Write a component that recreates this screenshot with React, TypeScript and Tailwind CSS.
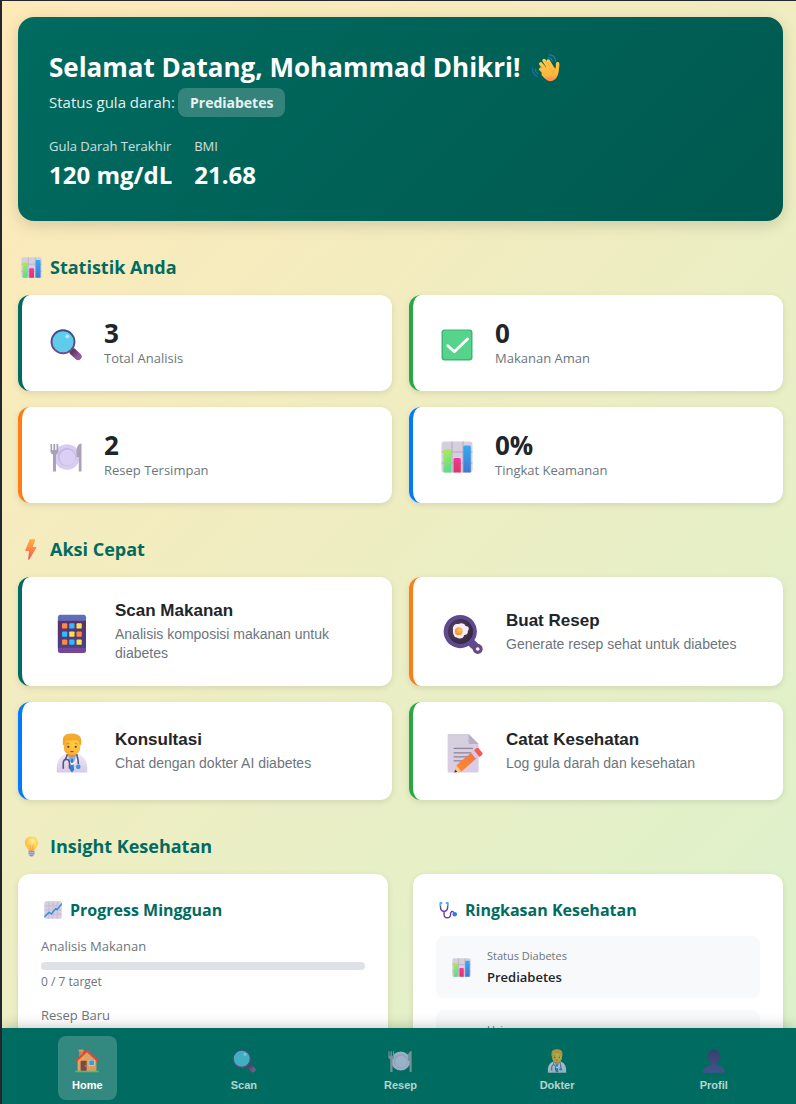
import type { ReactNode } from "react";

type IconProps = { className?: string };

/* Gradients shared by all the pictograms. */
function Gradients() {
  return (
    <svg className="absolute h-0 w-0" aria-hidden="true">
      <defs>
        <linearGradient id="g-green" x1="0" y1="0" x2="0.2" y2="1">
          <stop offset="0" stopColor="#b4ec51" />
          <stop offset="1" stopColor="#5fdc8c" />
        </linearGradient>
        <linearGradient id="g-pink" x1="0" y1="0" x2="0" y2="1">
          <stop offset="0" stopColor="#f5379a" />
          <stop offset="1" stopColor="#dc3560" />
        </linearGradient>
        <linearGradient id="g-blue" x1="0" y1="0" x2="0" y2="1">
          <stop offset="0" stopColor="#35aaf6" />
          <stop offset="1" stopColor="#4279d0" />
        </linearGradient>
        <linearGradient id="g-paper" x1="0" y1="0" x2="0" y2="1">
          <stop offset="0" stopColor="#d5cfdd" />
          <stop offset="1" stopColor="#d9cde6" />
        </linearGradient>
        <linearGradient id="g-rim" x1="0" y1="0" x2="0" y2="1">
          <stop offset="0" stopColor="#3c4a8c" />
          <stop offset="1" stopColor="#7a4a8c" />
        </linearGradient>
        <linearGradient id="g-handle" x1="0" y1="0" x2="1" y2="1">
          <stop offset="0" stopColor="#5f3a68" />
          <stop offset="1" stopColor="#95569c" />
        </linearGradient>
        <linearGradient id="g-bolt" x1="0" y1="0" x2="0" y2="1">
          <stop offset="0" stopColor="#ffb13c" />
          <stop offset="0.6" stopColor="#fa7d4c" />
          <stop offset="1" stopColor="#f5445f" />
        </linearGradient>
        <linearGradient id="g-phone" x1="0" y1="0" x2="0" y2="1">
          <stop offset="0" stopColor="#6070bb" />
          <stop offset="1" stopColor="#754494" />
        </linearGradient>
        <linearGradient id="g-screen" x1="0" y1="0" x2="0" y2="1">
          <stop offset="0" stopColor="#5c3166" />
          <stop offset="1" stopColor="#46418c" />
        </linearGradient>
        <radialGradient id="g-pan" cx="0.4" cy="0.4" r="0.7">
          <stop offset="0" stopColor="#5c4270" />
          <stop offset="1" stopColor="#2f2638" />
        </radialGradient>
        <radialGradient id="g-yolk" cx="0.65" cy="0.35" r="0.8">
          <stop offset="0" stopColor="#ffc94a" />
          <stop offset="1" stopColor="#ee8a2e" />
        </radialGradient>
        <radialGradient id="g-skin" cx="0.65" cy="0.4" r="0.8">
          <stop offset="0" stopColor="#ffd33b" />
          <stop offset="1" stopColor="#f9a435" />
        </radialGradient>
        <linearGradient id="g-hair" x1="0" y1="0" x2="0" y2="1">
          <stop offset="0" stopColor="#f2b034" />
          <stop offset="1" stopColor="#f79b28" />
        </linearGradient>
        <linearGradient id="g-coat" x1="0" y1="0" x2="0" y2="1">
          <stop offset="0" stopColor="#efeafa" />
          <stop offset="1" stopColor="#d5cae6" />
        </linearGradient>
        <linearGradient id="g-pencil" x1="0" y1="1" x2="1" y2="0">
          <stop offset="0" stopColor="#ff8a2e" />
          <stop offset="1" stopColor="#f5743f" />
        </linearGradient>
        <linearGradient id="g-hand" gradientUnits="userSpaceOnUse" x1="16" y1="4" x2="19" y2="31">
          <stop offset="0" stopColor="#ffcb4c" />
          <stop offset="0.75" stopColor="#ffb63c" />
          <stop offset="1" stopColor="#f58a55" />
        </linearGradient>
        <radialGradient id="g-bulb" cx="0.6" cy="0.35" r="0.7">
          <stop offset="0" stopColor="#fff0a0" />
          <stop offset="0.5" stopColor="#ffd250" />
          <stop offset="1" stopColor="#f5b54a" />
        </radialGradient>
        <linearGradient id="g-wall" x1="0" y1="0" x2="1" y2="1">
          <stop offset="0" stopColor="#e8a868" />
          <stop offset="1" stopColor="#d69a58" />
        </linearGradient>
        <linearGradient id="g-bust" x1="0" y1="0" x2="0" y2="1">
          <stop offset="0" stopColor="#4b2f70" />
          <stop offset="1" stopColor="#5c4aa0" />
        </linearGradient>
        <linearGradient id="g-tube" x1="0" y1="0" x2="0" y2="1">
          <stop offset="0" stopColor="#3f7fd8" />
          <stop offset="0.4" stopColor="#5c3aa0" />
          <stop offset="1" stopColor="#7442a0" />
        </linearGradient>
      </defs>
    </svg>
  );
}

function Svg({ className, children }: IconProps & { children: ReactNode }) {
  return (
    <svg viewBox="0 0 32 32" className={className} aria-hidden="true">
      {children}
    </svg>
  );
}

function BarChart({ className }: IconProps) {
  return (
    <Svg className={className}>
      <rect x="0.5" y="0.5" width="31" height="31" rx="3" fill="url(#g-paper)" />
      <path d="M11 .5v31M22 .5v31M.5 11h31M.5 22h31" stroke="#b3a9c0" strokeWidth="1" />
      <path d="M2.500 31.500V9.500A1.500 1.500 0 0 1 4 8h4.500A1.500 1.500 0 0 1 10 9.500v22z" fill="url(#g-green)" />
      <path d="M12.500 31.500V18.500A1.500 1.500 0 0 1 14 17h4.300a1.500 1.500 0 0 1 1.500 1.500v13z" fill="url(#g-pink)" />
      <path d="M22.300 31.500V6a1.500 1.500 0 0 1 1.500-1.500h4.500A1.500 1.500 0 0 1 29.800 6v25.500z" fill="url(#g-blue)" />
    </Svg>
  );
}

function Magnifier({ className }: IconProps) {
  return (
    <Svg className={className}>
      <path d="m23 22.800 5 4.700" stroke="url(#g-handle)" strokeWidth="7.200" strokeLinecap="round" />
      <path d="m19.500 19.500 3 3" stroke="#5c3563" strokeWidth="3" />
      <circle cx="13" cy="12.800" r="11.500" fill="#5fcdea" stroke="url(#g-rim)" strokeWidth="1.900" />
      <circle cx="17.300" cy="7.300" r="1.900" fill="#b8ebf8" />
    </Svg>
  );
}

function CheckMark({ className }: IconProps) {
  return (
    <Svg className={className}>
      <rect x="0.500" y="0.500" width="31" height="31" rx="3" fill="#3fb578" />
      <rect x="2" y="1.500" width="28" height="28.500" rx="2.500" fill="#57d48c" />
      <path d="M6.800 16.800 13.300 22.800 26.500 10" fill="none" stroke="#fff" strokeWidth="2.900" strokeLinecap="round" strokeLinejoin="round" />
    </Svg>
  );
}

function Plate({ className }: IconProps) {
  return (
    <Svg className={className}>
      <circle cx="17" cy="16" r="12.800" fill="#d8cdf0" />
      <circle cx="17" cy="16" r="9" fill="#c3b4e2" />
      <circle cx="17.500" cy="16.600" r="8" fill="#dccff5" />
      <path d="M.5 3h1.600v6h1.300V3h1.800v6h1.300V3h1.800v7.500c0 1.700-1 2.500-2.300 3V30.500H3V13.500C1.500 13 .5 12.200.5 10.500z" fill="#aaa2b6" />
      <path d="M31.500 2.500c-2.800 0-5 3-5 8v5.500h2.300v14.500h2.700z" fill="#aba2b8" />
    </Svg>
  );
}

function Bolt({ className }: IconProps) {
  return (
    <Svg className={className}>
      <path d="M13 1.200 6.500 17c-.3.800.1 1.300.8 1.300h5L11 30.500c-.1 1.500.8 1.700 1.500.6L23.500 13.500c.5-.8.1-1.500-.8-1.500h-4.900L21.500 2c.3-.8 0-1.500-1-1.500h-6.300c-.6 0-1 .2-1.200.7z" fill="url(#g-bolt)" />
    </Svg>
  );
}

function Phone({ className }: IconProps) {
  return (
    <Svg className={className}>
      <rect x="4.700" y="0.600" width="22.500" height="30.600" rx="2" fill="url(#g-phone)" />
      <path d="M4.700 5.500h22.500v21.500H4.700z" fill="url(#g-screen)" />
      <g fill="#ff8a3d">
        <rect x="8" y="7.400" width="4.200" height="4.200" rx=".7" />
        <rect x="8" y="20.400" width="4.200" height="4.200" rx=".7" />
        <rect x="19.600" y="13.900" width="4.200" height="4.200" rx=".7" />
      </g>
      <g fill="#36b9fb">
        <rect x="13.800" y="7.400" width="4.200" height="4.200" rx=".7" />
        <rect x="8" y="13.900" width="4.200" height="4.200" rx=".7" />
        <rect x="13.800" y="20.400" width="4.200" height="4.200" rx=".7" />
      </g>
      <g fill="#ffe14f">
        <rect x="19.600" y="7.400" width="4.200" height="4.200" rx=".7" />
        <rect x="13.800" y="13.900" width="4.200" height="4.200" rx=".7" />
        <rect x="19.600" y="20.400" width="4.200" height="4.200" rx=".7" />
      </g>
    </Svg>
  );
}

function Pan({ className }: IconProps) {
  return (
    <Svg className={className}>
      <path d="m21.500 22 6 5.500" stroke="#664a8c" strokeWidth="6.500" />
      <circle cx="27.800" cy="28" r="2.700" fill="#fff" stroke="#664a82" strokeWidth="2.500" />
      <circle cx="13.800" cy="14" r="13.300" fill="#5f4a90" />
      <circle cx="14" cy="14" r="10" fill="url(#g-pan)" />
      <path d="M8 12.500c-.5-3.500 2-5 4.500-4.500 2-1.200 5-.5 5.500 1.500 2.800 0 3.300 2.500 1.800 4 .5 2-1.300 3.300-2.800 3.300-.5 3-4 3.500-6 2-2.500-.5-3.200-3.300-3-6.300z" fill="#f8ecfa" />
      <circle cx="12.600" cy="13.700" r="3.100" fill="url(#g-yolk)" />
    </Svg>
  );
}

function Doctor({ className }: IconProps) {
  return (
    <Svg className={className}>
      <path d="M3.800 31.500v-3.500c0-6.500 4-11.300 9-11.500h6.400c5 .2 9 5 9 11.500v3.500z" fill="url(#g-coat)" />
      <path d="M12.500 16.500h7l-1.500 6-2 3-2-3z" fill="#7cb4e8" />
      <path d="m15.200 20.500-.9 9 1.700 2 1.700-2-.9-9z" fill="#2f7fcf" />
      <path d="M11.500 16.500c0 4.500 1 6.500 4.500 8.500 3.500-2 4.500-4 4.500-8.500" fill="none" stroke="#f3effc" strokeWidth="1.500" />
      <path d="M12.300 17c-.5 2-1 3-1.600 4M19.800 17c.5 3 1.300 4 1.300 8M9 28.500v-4c0-4.500 5-4.500 5 0v4" fill="none" stroke="#5c5384" strokeWidth="1.300" />
      <circle cx="21" cy="27" r="1.900" fill="#3f92e0" />
      <path d="M12.800 14h6.500v3.500c-1.500 2-5 2-6.500 0z" fill="#e68c30" />
      <path d="M9.500 6.500c0-4 13-4 13 0v5.500c0 7.500-13 7.500-13 0z" fill="url(#g-skin)" />
      <path d="M8.700 10V5.500C8.700 2.500 11 .5 14 .6c5-.8 9.300 1 9.300 5V10l-1.100-1c-.3-2.300-1-3.500-3-3.400-3 .3-6.500 0-8.200.200-.9.800-1.200 2-1.200 3.200z" fill="url(#g-hair)" />
      <path d="M11.300 9c.8-.7 1.800-.7 2.600-.3M18 8.700c.9-.4 1.800-.3 2.600.3" stroke="#d88035" strokeWidth=".8" fill="none" />
      <circle cx="13" cy="11" r=".9" fill="#5d3848" />
      <circle cx="19" cy="11" r=".9" fill="#5d3848" />
      <path d="M14.400 14.300h3.200c-.3 1.500-2.900 1.500-3.200 0z" fill="#d42f50" />
    </Svg>
  );
}

function Memo({ className }: IconProps) {
  return (
    <Svg className={className}>
      <path d="M4.500.7h16l8 8v22a.8.8 0 0 1-.8.800H4.500a.8.800 0 0 1-.8-.800V1.500a.8.800 0 0 1 .8-.800z" fill="url(#g-paper)" />
      <path d="M20.500.7v7a1 1 0 0 0 1 1h7z" fill="#b8afc6" />
      <path d="M8.500 12.300h15.500M8.500 15.800h15.500M8.500 19h13M8.500 22.300h9" stroke="#8c8398" strokeWidth="1" />
      <path d="m9 31.500 2-6L24 14.500l4 4.700L14.500 31z" fill="url(#g-pencil)" />
      <path d="m9 31.500 1.800-5.500 3.900 4.700-2.500.8z" fill="#f6c69a" />
      <path d="m9 31.500.7-2.200 1.800 1.700z" fill="#4a3040" />
      <path d="m22.300 15.800 2.500-2.200 4.300 5-2.500 2.200z" fill="#d6c9e6" />
      <path d="m24.800 13.600 1.500-1.200c1-.8 1.800-.6 2.500.2l2.400 2.800c.8.900.6 1.600-.2 2.300l-1.900 1.500z" fill="#f85a52" />
    </Svg>
  );
}

function Wave({ className }: IconProps) {
  return (
    <Svg className={className}>
      <path d="M18.500 4.300c2.600.1 4.300 1.700 4.600 4.200M19.500.9c4.300.2 7.200 3 7.500 7.300" fill="none" stroke="#1a86c4" strokeWidth="1.200" strokeLinecap="round" />
      <path d="M4 17.300c-.3 2.600 1 4.600 3.200 5.200M.9 16c-.7 4.400 1.500 8.300 5 9.300" fill="none" stroke="#1c72b8" strokeWidth="1.200" strokeLinecap="round" />
      <g stroke="url(#g-hand)" strokeLinecap="round" strokeWidth="4">
        <path d="m10 17.300 7 6.700" />
        <path d="m10 11.300 9 10.700" />
        <path d="m13.800 7.500 8.200 12.500" />
        <path d="m18.500 8 6 10" />
        <path d="M29.200 11c.6 4-.6 5-1 9" />
      </g>
      <path d="m11 19 9.500-8 6 5.500 3.800-1c.9 8-2.300 15.200-9 15.500-4 .2-6.800-3-10.300-7z" fill="url(#g-hand)" />
      <path d="m13.300 12.200 3.200 4M16.800 9l3.200 4.500" stroke="#e89a2e" strokeWidth=".7" strokeLinecap="round" />
      <path d="M27 16.500c-2.500 1.500-3.500 3.500-3.300 5.500" stroke="#ee9c35" strokeWidth=".8" fill="none" strokeLinecap="round" />
    </Svg>
  );
}

function Bulb({ className }: IconProps) {
  return (
    <Svg className={className}>
      <path d="M16 .8c-6 0-10 4.300-10 9.800 0 5.500 5 7.500 5.500 11.900h9C21 18.100 26 16.100 26 10.600 26 5.100 22 .8 16 .8z" fill="url(#g-bulb)" />
      <path d="m13.500 13 1.500 9h2l1.500-9" fill="none" stroke="#f19a35" strokeWidth="1" />
      <path d="M11.500 22.300h9v5.500c0 1-.8 1.500-1.700 1.800-.6 2.300-5 2.300-5.600 0-.9-.3-1.700-.800-1.700-1.800z" fill="#9a8bb4" />
      <path d="M11 25h10M11.300 28h9.400" stroke="#d2c6e4" strokeWidth="1" />
    </Svg>
  );
}

function LineChart({ className }: IconProps) {
  return (
    <Svg className={className}>
      <rect x="0.500" y="0.500" width="31" height="31" rx="3" fill="url(#g-paper)" />
      <path d="M8.500.5v31M16 .5v31M23.500.5v31M.5 8.500h31M.5 16h31M.5 23.500h31" stroke="#bdb0cc" strokeWidth="1" />
      <path d="m1.500 27.500 7.500-7.500 4 3 8-9.500 2.500 1.500 7.500-9.500" fill="none" stroke="#2c8fdf" strokeWidth="2.600" strokeLinejoin="round" strokeLinecap="round" />
    </Svg>
  );
}

function Scope({ className }: IconProps) {
  return (
    <Svg className={className}>
      <path d="M4.500 3.500H2.500v6c0 6 3 9 6.500 9s6.500-3 6.500-9v-6h-2M9 18.500v5c0 8.500 11.500 8.500 11.500 0 0-5 3-6 5-4 1.300 1.300 1.500 2 1.500 3.500" fill="none" stroke="url(#g-tube)" strokeWidth="2.500" strokeLinecap="round" />
      <path d="M2.500 3.500h2.500M13 3.500h2.500M2.500 4v4M15.500 4v4" stroke="#45b4ee" strokeWidth="2.500" strokeLinecap="round" />
      <circle cx="28" cy="23.500" r="4" fill="#2f7cf0" />
    </Svg>
  );
}

function House({ className }: IconProps) {
  return (
    <Svg className={className}>
      <path d="M5.500 1.500h5.500V12H5.500z" fill="#c98250" />
      <path d="M5 .8h6.500v2.400H5z" fill="#e39a62" />
      <path d="M3.500 15 16 3.500 28.500 15v14.500h-25z" fill="url(#g-wall)" />
      <path d="M7.500 16.500a1 1 0 0 1 1-1h6a1 1 0 0 1 1 1v13h-8z" fill="#7b4a48" />
      <circle cx="13.800" cy="22.500" r=".8" fill="#e8b060" />
      <rect x="18.300" y="14.500" width="7.700" height="8" rx=".8" fill="#f3d8b0" />
      <rect x="19" y="15.200" width="6.300" height="6.500" fill="#2d9df0" />
      <path d="m1.500 16 14.500-13.500 14.500 13.500" fill="none" stroke="#e8452f" strokeWidth="2.700" strokeLinecap="round" strokeLinejoin="round" />
      <path d="M.5 29h31v2h-31z" fill="#4fc26a" />
    </Svg>
  );
}

function Bust({ className }: IconProps) {
  return (
    <Svg className={className}>
      <path d="M8 9c-.3-5 3.500-8.300 8-8.300S24.300 4 24 9c1.200.2 1.200 3.500-.3 3.800-.6 3-2 4.700-3.700 5.700v2.500c6 .8 10.500 4.500 10.500 10.500h-29C1.500 25.500 6 21.800 12 21v-2.500c-1.700-1-3.100-2.700-3.700-5.700C6.800 12.500 6.800 9.200 8 9z" fill="url(#g-bust)" />
    </Svg>
  );
}

const stats = [
  { icon: Magnifier, value: "3", label: "Total Analisis", border: "border-[#006b60]" },
  { icon: CheckMark, value: "0", label: "Makanan Aman", border: "border-[#28a745]" },
  { icon: Plate, value: "2", label: "Resep Tersimpan", border: "border-[#fd7e14]" },
  { icon: BarChart, value: "0%", label: "Tingkat Keamanan", border: "border-[#007bff]" },
];

const actions = [
  { icon: Phone, title: "Scan Makanan", text: "Analisis komposisi makanan untuk diabetes", border: "border-[#006b60]" },
  { icon: Pan, title: "Buat Resep", text: "Generate resep sehat untuk diabetes", border: "border-[#fd7e14]" },
  { icon: Doctor, title: "Konsultasi", text: "Chat dengan dokter AI diabetes", border: "border-[#007bff]" },
  { icon: Memo, title: "Catat Kesehatan", text: "Log gula darah dan kesehatan", border: "border-[#28a745]" },
];

const progress = [
  { label: "Analisis Makanan", value: 0, target: 7 },
  { label: "Resep Baru", value: 0, target: 3 },
];

const summary = [
  { icon: BarChart, label: "Status Diabetes", value: "Prediabetes" },
  { icon: Bust, label: "Usia", value: "21 tahun" },
];

const tabs = [
  { icon: House, label: "Home", active: true },
  { icon: Magnifier, label: "Scan", active: false },
  { icon: Plate, label: "Resep", active: false },
  { icon: Doctor, label: "Dokter", active: false },
  { icon: Bust, label: "Profil", active: false },
];

function SectionTitle({ icon: Icon, children }: { icon: (p: IconProps) => ReactNode; children: ReactNode }) {
  return (
    <h2 className="mt-8 mb-3.5 flex items-center gap-2 pl-[3px] text-[18px] leading-7 font-bold text-[#006b60]">
      <Icon className="size-[21px]" />
      {children}
    </h2>
  );
}

export default function App() {
  return (
    <div className="flex h-screen flex-col overflow-hidden border-t border-l-2 border-[#23262f] bg-linear-135 from-[#ffe9b8] to-[#daf2cd] font-['Open_Sans',sans-serif]">
      <Gradients />
      <main className="min-h-0 flex-1 overflow-y-auto pt-4 pr-[13px] pl-4 [scrollbar-width:none]">
        <section className="rounded-2xl bg-linear-135 from-[#006b60] to-[#00594f] p-8 pl-[31px] text-white shadow-[0_4px_16px_rgba(0,0,0,0.15)]">
          <h1 className="flex items-center gap-3 text-[26px] leading-[37px] font-bold">
            Selamat Datang, Mohammad Dhikri!
            <Wave className="size-7" />
          </h1>
          <p className="mt-0.5 flex items-center gap-[3px] text-[15px] leading-[29px] text-white/90">
            Status gula darah:
            <span className="rounded-lg bg-white/20 px-3 text-[14px] font-bold">Prediabetes</span>
          </p>
          <dl className="mt-5 flex gap-[22px]">
            <div>
              <dt className="text-[13px] leading-[18px] text-white/80">Gula Darah Terakhir</dt>
              <dd className="mt-1.5 text-[24px] leading-7 font-bold">120 mg/dL</dd>
            </div>
            <div>
              <dt className="text-[13px] leading-[18px] text-white/80">BMI</dt>
              <dd className="mt-1.5 text-[24px] leading-7 font-bold">21.68</dd>
            </div>
          </dl>
        </section>

        <SectionTitle icon={BarChart}>Statistik Anda</SectionTitle>
        <div className="grid grid-cols-2 gap-x-[17px] gap-y-4">
          {stats.map(({ icon: Icon, value, label, border }) => (
            <article key={label} className={`flex items-center gap-[22px] rounded-xl border-l-4 bg-white pt-[25px] pr-6 pb-[21px] pl-7 shadow-[0_2px_6px_rgba(0,0,0,0.1)] ${border}`}>
              <Icon className="size-8 shrink-0" />
              <div>
                <p className="text-[26px] leading-[26px] font-bold text-[#212529]">{value}</p>
                <p className="text-[13px] leading-6 text-[#6c757d]">{label}</p>
              </div>
            </article>
          ))}
        </div>

        <SectionTitle icon={Bolt}>Aksi Cepat</SectionTitle>
        <div className="grid grid-cols-2 gap-x-[17px] gap-y-4">
          {actions.map(({ icon: Icon, title, text, border }) => (
            <button key={title} type="button" className={`flex items-center gap-[23px] rounded-xl border-l-4 bg-white py-[23px] pr-8 pl-[30px] text-left font-['Liberation_Sans',sans-serif] shadow-[0_2px_6px_rgba(0,0,0,0.1)] ${border}`}>
              <span className="flex h-[52px] shrink-0 items-center pt-1">
                <Icon className="size-10" />
              </span>
              <span>
                <span className="block text-[17px] leading-[22px] font-bold text-[#212529]">{title}</span>
                <span className="mt-[3px] block text-[14px] leading-[19px] text-[#6c757d]">{text}</span>
              </span>
            </button>
          ))}
        </div>

        <SectionTitle icon={Bulb}>Insight Kesehatan</SectionTitle>
        <div className="grid grid-cols-2 gap-x-[25px]">
          <section className="rounded-xl bg-white px-[23px] py-6 shadow-[0_2px_6px_rgba(0,0,0,0.1)]">
            <h3 className="flex items-center gap-2 pl-[3px] text-[16px] leading-6 font-bold text-[#006b60]">
              <LineChart className="size-[18px]" />
              Progress Mingguan
            </h3>
            {progress.map(({ label, value, target }) => (
              <div key={label} className="mt-3.5 text-[#6c757d]">
                <p className="text-[13px] leading-5">{label}</p>
                <div className="mt-1.5 h-2 overflow-hidden rounded-full bg-[#dee2e6]">
                  <div className="h-full bg-[#006b60]" style={{ width: `${(value / target) * 100}%` }} />
                </div>
                <p className="mt-[3px] text-[12px] leading-[18px]">{`${value} / ${target} target`}</p>
              </div>
            ))}
          </section>
          <section className="rounded-xl bg-white px-[23px] py-6 shadow-[0_2px_6px_rgba(0,0,0,0.1)]">
            <h3 className="flex items-center gap-2 pl-[3px] text-[16px] leading-6 font-bold text-[#006b60]">
              <Scope className="size-[18px]" />
              Ringkasan Kesehatan
            </h3>
            <div className="mt-3.5 flex flex-col gap-3">
              {summary.map(({ icon: Icon, label, value }) => (
                <div key={label} className="flex items-center gap-4 rounded-lg bg-[#f8f9fa] px-4 py-[11px]">
                  <Icon className="size-[19px] shrink-0" />
                  <div>
                    <p className="text-[11px] leading-[18px] text-[#6c757d]">{label}</p>
                    <p className="mt-0.5 text-[13px] leading-5 font-semibold text-[#212529]">{value}</p>
                  </div>
                </div>
              ))}
            </div>
          </section>
        </div>
      </main>

      <nav className="relative z-10 grid grid-cols-5 bg-[#006b60] pt-2 pr-1 pb-1 pl-[7px] font-['Liberation_Sans',sans-serif] shadow-[0_-2px_12px_rgba(0,0,0,0.2)]">
        {tabs.map(({ icon: Icon, label, active }) => (
          <a
            key={label}
            href={`#${label.toLowerCase()}`}
            aria-current={active ? "page" : undefined}
            className={`flex h-16 w-[59px] flex-col items-center justify-self-center rounded-lg pt-[13px] text-white ${active ? "bg-white/20" : "opacity-70"}`}
          >
            <Icon className="size-6" />
            <span className="mt-1 text-[11px] leading-4 font-bold">{label}</span>
          </a>
        ))}
      </nav>
    </div>
  );
}
